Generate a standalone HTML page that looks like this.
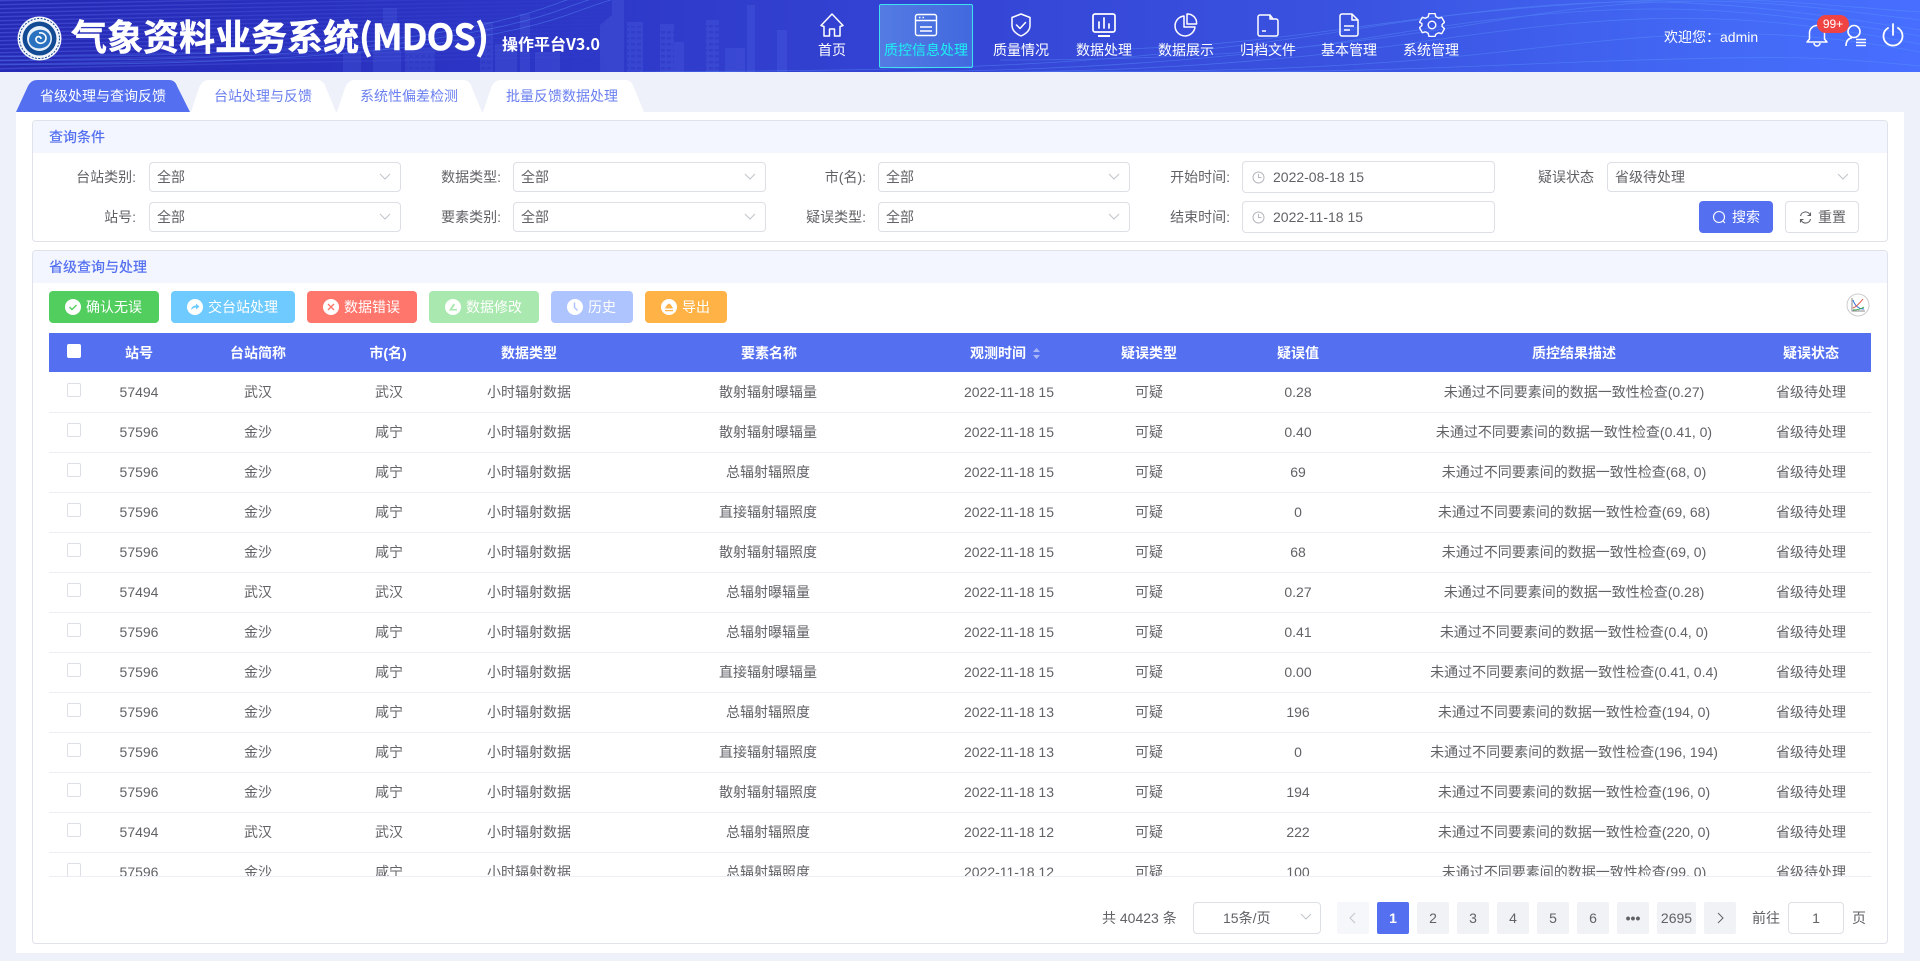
<!DOCTYPE html>
<html lang="zh">
<head>
<meta charset="utf-8">
<title>气象资料业务系统(MDOS)</title>
<style>
*{box-sizing:border-box;margin:0;padding:0}
html,body{width:1920px;height:961px;overflow:hidden;background:#eef1f9}
body{position:relative;font-family:"Liberation Sans","Noto Sans CJK SC",sans-serif;font-size:14px;color:#606266}
.a{position:absolute;white-space:nowrap}
#hd{left:0;top:0;width:1920px;height:72px;overflow:hidden;background:linear-gradient(90deg,#2529b4 0%,#2b34c4 25%,#3342d2 45%,#3a52e0 70%,#4369f6 90%,#476eff 100%)}
.nt{color:#fff;width:100px;text-align:center;top:40px;line-height:20px;height:20px}
.ni{top:13px;width:26px;height:24px}
.lbl{line-height:20px;height:20px}
.sel{background:#fff;border:1px solid #dcdfe6;border-radius:4px;height:30px;width:252px;line-height:28px;padding-left:7px}
.sel svg{position:absolute;right:8px;top:9px}
.dt{background:#fff;border:1px solid #dcdfe6;border-radius:4px;height:32px;width:253px;line-height:30px;padding-left:30px}
.dt svg{position:absolute;left:9px;top:9px}
.panel{background:#fff;border:1px solid #dfe2ea;border-radius:4px;left:32px;width:1856px}
.ph{position:absolute;left:0;top:0;right:0;height:32px;background:#f3f6fe;color:#5470f0;line-height:32px;padding-left:16px;font-weight:500;border-radius:4px 4px 0 0}
.btn{top:291px;height:32px;border-radius:4px;color:#fff;line-height:32px}
.btn svg{position:absolute;top:8px;left:16px}
.btn span{position:absolute;left:37px;top:0}
.th{position:absolute;top:0;width:300px;margin-left:-150px;text-align:center;line-height:40px;color:#fff;font-weight:bold}
.r{position:absolute;left:0;width:1822px;height:40px;border-bottom:1px solid #ebeef5}
.r span{position:absolute;top:0;width:500px;margin-left:-250px;text-align:center;line-height:39px;white-space:nowrap}
.r i{position:absolute;left:18px;top:10px;width:14px;height:14px;background:#fff;border:1px solid #dcdfe6;border-radius:2px}
.c1{left:90px}.c2{left:209px}.c3{left:339px}.c4{left:480px}.c5{left:719px}.c6{left:960px}.c7{left:1100px}.c8{left:1249px}.c9{left:1525px}.c10{left:1762px}
.th.c5{left:720px}
.r .c3{left:340px}
.pg{top:902px;width:32px;height:32px;line-height:32px;text-align:center;background:#f0f2f5;color:#606266;border-radius:2px}
</style>
</head>
<body>

<div class="a" id="hd">
<svg class="a" style="left:0;top:0" width="1920" height="72" viewBox="0 0 1920 72">
<defs>
<pattern id="ln" width="8" height="4" patternUnits="userSpaceOnUse"><rect width="8" height="1.4" fill="#5a68e8" opacity=".45"/></pattern>
<pattern id="wn" width="6" height="6" patternUnits="userSpaceOnUse"><rect x="1" y="1" width="4" height="2.500" fill="#2a36c4" opacity=".5"/></pattern>
<linearGradient id="fd" x1="0" x2="1" y1="0" y2="0"><stop offset="0" stop-color="#fff"/><stop offset="1" stop-color="#fff" stop-opacity="0"/></linearGradient>
<mask id="mk"><rect width="640" height="72" fill="url(#fd)"/></mask>
</defs>
<g transform="skewY(-1.2)"><rect x="0" y="0" width="640" height="90" fill="url(#ln)" mask="url(#mk)"/></g>
<g fill="#5a70e6" opacity=".22">
<rect x="343" y="52" width="18" height="20"/><rect x="373" y="50" width="28" height="22"/><rect x="383" y="8" width="14" height="64"/><rect x="405" y="48" width="30" height="24"/><rect x="480" y="22" width="13" height="50"/><rect x="495" y="44" width="22" height="28"/><rect x="520" y="14" width="10" height="58"/><rect x="535" y="52" width="25" height="20"/><path d="M600 72V25l12-10V0h12v72z"/><rect x="627" y="22" width="16" height="50"/><rect x="660" y="24" width="14" height="48"/><rect x="672" y="42" width="12" height="30"/><rect x="706" y="20" width="13" height="52"/><rect x="725" y="48" width="20" height="24"/><rect x="747" y="5" width="8" height="67"/><rect x="777" y="30" width="10" height="42"/>
</g>
<g fill="url(#wn)">
<rect x="627" y="26" width="16" height="46"/><rect x="706" y="24" width="13" height="48"/><rect x="660" y="30" width="14" height="42"/><rect x="480" y="26" width="13" height="46"/><rect x="405" y="52" width="30" height="20"/>
</g>
<g fill="none" stroke="#5f9dff" stroke-width=".8" opacity=".4">
<path d="M0 60C220 62 450 50 560 10S620-2 660 -10"/><path d="M0 64C220 66 460 54 570 14S630 2 670 -6"/><path d="M0 56C220 58 440 46 550 6S610-6 650 -14"/>
<path d="M640 72C900 70 1100 70 1350 30S1700 -5 1920 30"/><path d="M680 72C900 74 1150 74 1380 36S1720 2 1920 36"/><path d="M800 72C1000 74 1200 74 1420 42S1740 10 1920 44"/><path d="M1000 72C1200 72 1340 70 1500 52S1760 22 1920 52"/><path d="M1000 60C1200 60 1320 50 1500 20S1760 0 1920 20"/><path d="M1100 50C1300 44 1360 20 1550 6S1800 4 1920 12"/><path d="M1200 72C1400 72 1500 64 1640 60S1820 56 1920 66"/>
</g>
</svg>

<svg class="a" style="left:17px;top:16px" width="45" height="45" viewBox="0 0 45 45">
<circle cx="22.5" cy="22.5" r="22" fill="#f4f6fb"/>
<circle cx="22.5" cy="22.5" r="17" fill="#134a94"/>
<circle cx="22.5" cy="22.5" r="12.5" fill="#e8f0fa"/>
<path d="M12 24c0-5 4-9 9-10 5-1 10 1 12 6 1 3 0 7-2 9-3 3-8 4-12 3-4-1-7-4-7-8z" fill="#2a72c0"/>
<path d="M22 17c4-1 7 2 7 5 0 4-4 6-7 5-3-1-4-4-2-6 2-1 4 0 4 2" fill="none" stroke="#fff" stroke-width="1.6"/>
<circle cx="22.5" cy="22.5" r="20" fill="none" stroke="#134a94" stroke-width="1" stroke-dasharray="2 1.4"/>
</svg>
<div class="a" style="left:71px;top:11px;height:48px;line-height:48px;font-size:36px;font-weight:bold;color:#fff;font-family:'Noto Sans CJK SC','Liberation Sans',sans-serif;-webkit-text-stroke:.5px #fff">气象资料业务系统<span style="letter-spacing:-.8px">(MDOS)</span></div>
<div class="a" style="left:502px;top:31px;line-height:24px;font-size:16px;font-weight:bold;color:#fff;font-family:'Noto Sans CJK SC','Liberation Sans',sans-serif">操作平台V3.0</div>

<div class="a" style="left:879px;top:4px;width:94px;height:64px;border:1px solid #3fe0f0;border-radius:2px;background:linear-gradient(90deg,rgba(110,170,240,.55),rgba(90,170,240,.35))"></div>

<svg class="a ni" style="left:819px" viewBox="0 0 26 24" fill="none" stroke="#fff" stroke-width="1.5" stroke-linejoin="round"><path d="M13 1 2 12.5l3 1V23h5.500v-7h5v7H21v-9.500l3-1z"/></svg>
<svg class="a ni" style="left:913px" viewBox="0 0 26 24" fill="none" stroke="#fff" stroke-width="1.4"><rect x="2.500" y="1.500" width="21" height="21" rx="2"/><path d="M3 7.500h20M7 14h12M7 18h12" stroke-width="1.400"/><path d="M6 4.500h1.500M9.500 4.500H11" /></svg>
<svg class="a ni" style="left:1008px" viewBox="0 0 26 24" fill="none" stroke="#fff" stroke-width="1.5" stroke-linejoin="round"><path d="M13 1 4 4.500v8c0 5 4.500 8.500 9 10.500 4.500-2 9-5.500 9-10.500v-8z"/><path d="m8.500 12 3.500 3.500 5.500-6" stroke-linecap="round"/></svg>
<svg class="a ni" style="left:1091px" viewBox="0 0 26 24" fill="none" stroke="#fff" stroke-width="1.700"><rect x="2" y="1" width="22" height="18" rx="2"/><path d="M8 15V9M13 15V5M18 15v-4" stroke-linecap="round"/><path d="M7 23h12" stroke-width="2"/></svg>
<svg class="a ni" style="left:1173px" viewBox="0 0 26 24" fill="none" stroke="#fff" stroke-width="1.500" stroke-linejoin="round"><path d="M11 3a10 10 0 1 0 11 11H11z"/><path d="M14 1a9 9 0 0 1 9.500 10H14z"/></svg>
<svg class="a ni" style="left:1255px" viewBox="0 0 26 24" fill="none" stroke="#fff" stroke-width="1.500" stroke-linejoin="round"><path d="M3 4a2 2 0 0 1 2-2h10l3 4h3a2 2 0 0 1 2 2v13a2 2 0 0 1-2 2H5a2 2 0 0 1-2-2z"/><path d="M15 2v4h3" /><path d="M7 18h4"/></svg>
<svg class="a ni" style="left:1336px" viewBox="0 0 26 24" fill="none" stroke="#fff" stroke-width="1.500" stroke-linejoin="round"><path d="M4 3a2 2 0 0 1 2-2h10l6 6v14a2 2 0 0 1-2 2H6a2 2 0 0 1-2-2z"/><path d="M16 1v6h6M8 13h10M8 17h6"/></svg>
<svg class="a ni" style="left:1419px" viewBox="0 0 26 24" fill="none" stroke="#fff" stroke-width="1.400" stroke-linejoin="round"><path d="M10 1h6l.8 3.200 2.700 1.500 3.200-.9 2.800 5-2.400 2.200v2l2.400 2.200-2.800 5-3.200-.9-2.700 1.500L16 24h-6l-.8-3.200-2.700-1.500-3.200.9-2.800-5 2.400-2.200v-2L.5 9.800l2.800-5 3.200.9 2.700-1.500z" transform="translate(0 -.5)"/><circle cx="13" cy="12" r="3.800"/></svg>

<div class="a nt" style="left:782px">首页</div>
<div class="a nt" style="left:876px;color:#1df0f4">质控信息处理</div>
<div class="a nt" style="left:971px">质量情况</div>
<div class="a nt" style="left:1054px">数据处理</div>
<div class="a nt" style="left:1136px">数据展示</div>
<div class="a nt" style="left:1218px">归档文件</div>
<div class="a nt" style="left:1299px">基本管理</div>
<div class="a nt" style="left:1381px">系统管理</div>

<div class="a" style="left:1664px;top:27px;line-height:20px;color:#fff">欢迎您：admin</div>
<svg class="a" style="left:1806px;top:24px" width="22" height="23" viewBox="0 0 22 23" fill="none" stroke="#fff" stroke-width="1.500" stroke-linejoin="round"><path d="M1 18h20l-2.500-3V9a7.500 7.500 0 0 0-15 0v6z"/><path d="M8 19a3 3 0 0 0 6 0"/></svg>
<svg class="a" style="left:1845px;top:24px" width="21" height="23" viewBox="0 0 21 23" fill="none" stroke="#fff" stroke-width="1.600"><circle cx="9" cy="7.500" r="6"/><path d="M1 22c0-5 2.500-7.500 6-8.200"/><path d="M11 15.500h10M11 18.500h10M11 21.500h10" stroke-width="1.500"/></svg>
<div class="a" style="left:1817px;top:15px;width:32px;height:18px;border-radius:9px;background:#f04444;color:#fff;font-size:12px;line-height:18px;text-align:center">99+</div>
<svg class="a" style="left:1882px;top:23px" width="22" height="24" viewBox="0 0 22 24" fill="none" stroke="#fff" stroke-width="1.800" stroke-linecap="round"><path d="M11 1v11"/><path d="M6 5a9.500 9.500 0 1 0 10 0"/></svg>
</div>

<!-- tabs -->
<svg class="a" style="left:0;top:80px" width="660" height="32" viewBox="0 0 660 32">
<path d="M16 32 28 6Q31 0 37 0H169Q175 0 177 6L190 32Z" fill="#5470f0"/>
<path d="M191 32 199 8Q202 0 209 0H317Q324 0 326 8L336 32Z" fill="#fff"/>
<path d="M337 32 345 8Q348 0 355 0H463Q470 0 472 8L482 32Z" fill="#fff"/>
<path d="M483 32 491 8Q494 0 501 0H625Q632 0 634 8L644 32Z" fill="#fff"/>
</svg>
<div class="a" style="left:40px;top:86px;line-height:20px;color:#fff">省级处理与查询反馈</div>
<div class="a" style="left:214px;top:86px;line-height:20px;color:#6a7ff0">台站处理与反馈</div>
<div class="a" style="left:360px;top:86px;line-height:20px;color:#6a7ff0">系统性偏差检测</div>
<div class="a" style="left:506px;top:86px;line-height:20px;color:#6a7ff0">批量反馈数据处理</div>

<div class="a" style="left:16px;top:112px;width:1888px;height:841px;background:#fff"></div>

<!-- query panel -->
<div class="a panel" style="top:120px;height:122px"><div class="ph">查询条件</div></div>

<div class="a lbl" style="right:1784px;top:167px">台站类别:</div>
<div class="a sel" style="left:149px;top:162px">全部<svg width="14" height="10" viewBox="0 0 14 10" fill="none" stroke="#c0c4cc" stroke-width="1"><path d="m2 2 5 5 5-5"/></svg></div>
<div class="a lbl" style="right:1419px;top:167px">数据类型:</div>
<div class="a sel" style="left:513px;top:162px;width:253px">全部<svg width="14" height="10" viewBox="0 0 14 10" fill="none" stroke="#c0c4cc" stroke-width="1"><path d="m2 2 5 5 5-5"/></svg></div>
<div class="a lbl" style="right:1054px;top:167px">市(名):</div>
<div class="a sel" style="left:878px;top:162px">全部<svg width="14" height="10" viewBox="0 0 14 10" fill="none" stroke="#c0c4cc" stroke-width="1"><path d="m2 2 5 5 5-5"/></svg></div>
<div class="a lbl" style="right:690px;top:167px">开始时间:</div>
<div class="a dt" style="left:1242px;top:161px">2022-08-18 15<svg width="13" height="13" viewBox="0 0 13 13" fill="none" stroke="#b5b8bf"><circle cx="6.500" cy="6.500" r="5.500"/><path d="M6.500 3v3.500H9.500"/></svg></div>
<div class="a lbl" style="right:326px;top:167px">疑误状态</div>
<div class="a sel" style="left:1607px;top:162px">省级待处理<svg width="14" height="10" viewBox="0 0 14 10" fill="none" stroke="#c0c4cc" stroke-width="1"><path d="m2 2 5 5 5-5"/></svg></div>

<div class="a lbl" style="right:1784px;top:207px">站号:</div>
<div class="a sel" style="left:149px;top:202px">全部<svg width="14" height="10" viewBox="0 0 14 10" fill="none" stroke="#c0c4cc" stroke-width="1"><path d="m2 2 5 5 5-5"/></svg></div>
<div class="a lbl" style="right:1419px;top:207px">要素类别:</div>
<div class="a sel" style="left:513px;top:202px;width:253px">全部<svg width="14" height="10" viewBox="0 0 14 10" fill="none" stroke="#c0c4cc" stroke-width="1"><path d="m2 2 5 5 5-5"/></svg></div>
<div class="a lbl" style="right:1054px;top:207px">疑误类型:</div>
<div class="a sel" style="left:878px;top:202px">全部<svg width="14" height="10" viewBox="0 0 14 10" fill="none" stroke="#c0c4cc" stroke-width="1"><path d="m2 2 5 5 5-5"/></svg></div>
<div class="a lbl" style="right:690px;top:207px">结束时间:</div>
<div class="a dt" style="left:1242px;top:201px">2022-11-18 15<svg width="13" height="13" viewBox="0 0 13 13" fill="none" stroke="#b5b8bf"><circle cx="6.500" cy="6.500" r="5.500"/><path d="M6.500 3v3.500H9.500"/></svg></div>

<div class="a" style="left:1699px;top:201px;width:74px;height:32px;border-radius:4px;background:#5470f0;color:#fff;line-height:32px;padding-left:33px">搜索<svg class="a" style="left:13px;top:9px" width="15" height="15" viewBox="0 0 15 15" fill="none" stroke="#fff" stroke-width="1.100"><circle cx="7" cy="7" r="5.500"/><path d="m11 11 2 2"/></svg></div>
<div class="a" style="left:1785px;top:201px;width:74px;height:32px;border-radius:4px;background:#fff;border:1px solid #dcdfe6;line-height:30px;padding-left:32px">重置<svg class="a" style="left:13px;top:9px" width="13" height="13" viewBox="0 0 13 13" fill="none" stroke="#606266" stroke-width="1.100"><path d="M1.500 5A5 5 0 0 1 11 4M11.500 8A5 5 0 0 1 2 9"/><path d="M11.500 1.500V4.500H8.500M1.500 11.500V8.500H4.500"/></svg></div>

<!-- main panel -->
<div class="a panel" style="top:250px;height:694px"><div class="ph">省级查询与处理</div></div>

<div class="a btn" style="left:49px;width:110px;background:#52ce5f"><svg width="16" height="16" viewBox="0 0 16 16"><circle cx="8" cy="8" r="8" fill="#fff"/><path d="m4.500 8 2.500 2.500 4.500-4.500" fill="none" stroke="#52ce5f" stroke-width="1.400"/></svg><span>确认无误</span></div>
<div class="a btn" style="left:171px;width:124px;background:#6fcbff"><svg width="16" height="16" viewBox="0 0 16 16"><circle cx="8" cy="8" r="8" fill="#fff"/><path d="M4 11c.5-3 2.500-4.500 5-4.500V4.500l3.500 3-3.500 3V8.500C7 8.500 5.500 9.500 4 11z" fill="#6fcbff"/></svg><span>交台站处理</span></div>
<div class="a btn" style="left:307px;width:110px;background:#ff766d"><svg width="16" height="16" viewBox="0 0 16 16"><circle cx="8" cy="8" r="8" fill="#fff"/><path d="m5 5 6 6M11 5l-6 6" stroke="#ff766d" stroke-width="1.400"/></svg><span>数据错误</span></div>
<div class="a btn" style="left:429px;width:110px;background:#a9e8ae"><svg width="16" height="16" viewBox="0 0 16 16"><circle cx="8" cy="8" r="8" fill="#fff"/><path d="M4 11.500 8.500 4.500 10 6 7 10h5v1.500z" fill="#a9e8ae"/></svg><span>数据修改</span></div>
<div class="a btn" style="left:551px;width:82px;background:#aec4ff"><svg width="16" height="16" viewBox="0 0 16 16"><circle cx="8" cy="8" r="8" fill="#fff"/><path d="M7.500 3.500v5l3 3" fill="none" stroke="#aec4ff" stroke-width="1.500"/></svg><span>历史</span></div>
<div class="a btn" style="left:645px;width:82px;background:#ffb347"><svg width="16" height="16" viewBox="0 0 16 16"><circle cx="8" cy="8" r="8" fill="#fff"/><path d="M4 9.500C5 7 6 5.500 8 4.500 10 5.500 11 7 12 9.500zM4 11h8v1.200H4z" fill="#ffb347"/></svg><span>导出</span></div>

<svg class="a" style="left:1846px;top:293px" width="24" height="24" viewBox="0 0 24 24" fill="none"><ellipse cx="12" cy="12" rx="11" ry="11" stroke="#ccc"/><path d="M6 5v13h13" stroke="#888"/><path d="M7 7c2 6 6 9 11 9" stroke="#2a6fd0"/><path d="M7 15c3-1 6-4 10-9" stroke="#e05040"/><path d="M7 17c4 0 8-1 11-3" stroke="#3caa50"/></svg>

<!-- table -->
<div class="a" style="left:49px;top:333px;width:1822px;height:39px;background:#5470f0">
<div class="a" style="left:18px;top:11px;width:14px;height:14px;background:#fff;border-radius:2px"></div>
<div class="th c1">站号</div><div class="th c2">台站简称</div><div class="th c3">市(名)</div><div class="th c4">数据类型</div><div class="th c5">要素名称</div>
<div class="th" style="left:949px">观测时间</div>
<svg class="a" style="left:982px;top:14px" width="11" height="13" viewBox="0 0 11 13"><path d="M5.500 1 9 5H2z" fill="#a9b7f6"/><path d="M5.500 12 9 8H2z" fill="#a9b7f6"/></svg>
<div class="th c7">疑误类型</div><div class="th c8">疑误值</div><div class="th c9">质控结果描述</div><div class="th c10">疑误状态</div>
</div>

<div class="a" style="left:49px;top:373px;width:1822px;height:504px;overflow:hidden;border-bottom:1px solid #ebeef5">
<div class="r" style="top:0"><i></i><span class="c1">57494</span><span class="c2">武汉</span><span class="c3">武汉</span><span class="c4">小时辐射数据</span><span class="c5">散射辐射曝辐量</span><span class="c6">2022-11-18 15</span><span class="c7">可疑</span><span class="c8">0.28</span><span class="c9">未通过不同要素间的数据一致性检查(0.27)</span><span class="c10">省级待处理</span></div>
<div class="r" style="top:40px"><i></i><span class="c1">57596</span><span class="c2">金沙</span><span class="c3">咸宁</span><span class="c4">小时辐射数据</span><span class="c5">散射辐射曝辐量</span><span class="c6">2022-11-18 15</span><span class="c7">可疑</span><span class="c8">0.40</span><span class="c9">未通过不同要素间的数据一致性检查(0.41, 0)</span><span class="c10">省级待处理</span></div>
<div class="r" style="top:80px"><i></i><span class="c1">57596</span><span class="c2">金沙</span><span class="c3">咸宁</span><span class="c4">小时辐射数据</span><span class="c5">总辐射辐照度</span><span class="c6">2022-11-18 15</span><span class="c7">可疑</span><span class="c8">69</span><span class="c9">未通过不同要素间的数据一致性检查(68, 0)</span><span class="c10">省级待处理</span></div>
<div class="r" style="top:120px"><i></i><span class="c1">57596</span><span class="c2">金沙</span><span class="c3">咸宁</span><span class="c4">小时辐射数据</span><span class="c5">直接辐射辐照度</span><span class="c6">2022-11-18 15</span><span class="c7">可疑</span><span class="c8">0</span><span class="c9">未通过不同要素间的数据一致性检查(69, 68)</span><span class="c10">省级待处理</span></div>
<div class="r" style="top:160px"><i></i><span class="c1">57596</span><span class="c2">金沙</span><span class="c3">咸宁</span><span class="c4">小时辐射数据</span><span class="c5">散射辐射辐照度</span><span class="c6">2022-11-18 15</span><span class="c7">可疑</span><span class="c8">68</span><span class="c9">未通过不同要素间的数据一致性检查(69, 0)</span><span class="c10">省级待处理</span></div>
<div class="r" style="top:200px"><i></i><span class="c1">57494</span><span class="c2">武汉</span><span class="c3">武汉</span><span class="c4">小时辐射数据</span><span class="c5">总辐射曝辐量</span><span class="c6">2022-11-18 15</span><span class="c7">可疑</span><span class="c8">0.27</span><span class="c9">未通过不同要素间的数据一致性检查(0.28)</span><span class="c10">省级待处理</span></div>
<div class="r" style="top:240px"><i></i><span class="c1">57596</span><span class="c2">金沙</span><span class="c3">咸宁</span><span class="c4">小时辐射数据</span><span class="c5">总辐射曝辐量</span><span class="c6">2022-11-18 15</span><span class="c7">可疑</span><span class="c8">0.41</span><span class="c9">未通过不同要素间的数据一致性检查(0.4, 0)</span><span class="c10">省级待处理</span></div>
<div class="r" style="top:280px"><i></i><span class="c1">57596</span><span class="c2">金沙</span><span class="c3">咸宁</span><span class="c4">小时辐射数据</span><span class="c5">直接辐射曝辐量</span><span class="c6">2022-11-18 15</span><span class="c7">可疑</span><span class="c8">0.00</span><span class="c9">未通过不同要素间的数据一致性检查(0.41, 0.4)</span><span class="c10">省级待处理</span></div>
<div class="r" style="top:320px"><i></i><span class="c1">57596</span><span class="c2">金沙</span><span class="c3">咸宁</span><span class="c4">小时辐射数据</span><span class="c5">总辐射辐照度</span><span class="c6">2022-11-18 13</span><span class="c7">可疑</span><span class="c8">196</span><span class="c9">未通过不同要素间的数据一致性检查(194, 0)</span><span class="c10">省级待处理</span></div>
<div class="r" style="top:360px"><i></i><span class="c1">57596</span><span class="c2">金沙</span><span class="c3">咸宁</span><span class="c4">小时辐射数据</span><span class="c5">直接辐射辐照度</span><span class="c6">2022-11-18 13</span><span class="c7">可疑</span><span class="c8">0</span><span class="c9">未通过不同要素间的数据一致性检查(196, 194)</span><span class="c10">省级待处理</span></div>
<div class="r" style="top:400px"><i></i><span class="c1">57596</span><span class="c2">金沙</span><span class="c3">咸宁</span><span class="c4">小时辐射数据</span><span class="c5">散射辐射辐照度</span><span class="c6">2022-11-18 13</span><span class="c7">可疑</span><span class="c8">194</span><span class="c9">未通过不同要素间的数据一致性检查(196, 0)</span><span class="c10">省级待处理</span></div>
<div class="r" style="top:440px"><i></i><span class="c1">57494</span><span class="c2">武汉</span><span class="c3">武汉</span><span class="c4">小时辐射数据</span><span class="c5">总辐射辐照度</span><span class="c6">2022-11-18 12</span><span class="c7">可疑</span><span class="c8">222</span><span class="c9">未通过不同要素间的数据一致性检查(220, 0)</span><span class="c10">省级待处理</span></div>
<div class="r" style="top:480px"><i></i><span class="c1">57596</span><span class="c2">金沙</span><span class="c3">咸宁</span><span class="c4">小时辐射数据</span><span class="c5">总辐射辐照度</span><span class="c6">2022-11-18 12</span><span class="c7">可疑</span><span class="c8">100</span><span class="c9">未通过不同要素间的数据一致性检查(99, 0)</span><span class="c10">省级待处理</span></div>
</div>

<!-- pagination -->
<div class="a" style="left:1102px;top:908px;line-height:20px">共 40423 条</div>
<div class="a" style="left:1193px;top:902px;width:128px;height:32px;border:1px solid #dcdfe6;border-radius:4px;line-height:30px;padding-left:29px;background:#fff">15条/页<svg class="a" style="left:105px;top:9px" width="14" height="10" viewBox="0 0 14 10" fill="none" stroke="#c0c4cc"><path d="m2 2 5 5 5-5"/></svg></div>
<div class="a pg" style="left:1337px;background:#f5f7fa"><svg width="32" height="32" viewBox="0 0 32 32" fill="none" stroke="#c0c4cc"><path d="m18 11-5 5 5 5"/></svg></div>
<div class="a pg" style="left:1377px;background:#5470f0;color:#fff;font-weight:bold">1</div>
<div class="a pg" style="left:1417px">2</div>
<div class="a pg" style="left:1457px">3</div>
<div class="a pg" style="left:1497px">4</div>
<div class="a pg" style="left:1537px">5</div>
<div class="a pg" style="left:1577px">6</div>
<div class="a pg" style="left:1617px;font-weight:bold;letter-spacing:0">•••</div>
<div class="a pg" style="left:1657px;width:39px">2695</div>
<div class="a pg" style="left:1704px"><svg width="32" height="32" viewBox="0 0 32 32" fill="none" stroke="#606266"><path d="m14 11 5 5-5 5"/></svg></div>
<div class="a" style="left:1752px;top:908px;line-height:20px">前往</div>
<div class="a" style="left:1788px;top:902px;width:56px;height:32px;border:1px solid #dcdfe6;border-radius:4px;line-height:30px;text-align:center;background:#fff">1</div>
<div class="a" style="left:1852px;top:908px;line-height:20px">页</div>

</body>
</html>
